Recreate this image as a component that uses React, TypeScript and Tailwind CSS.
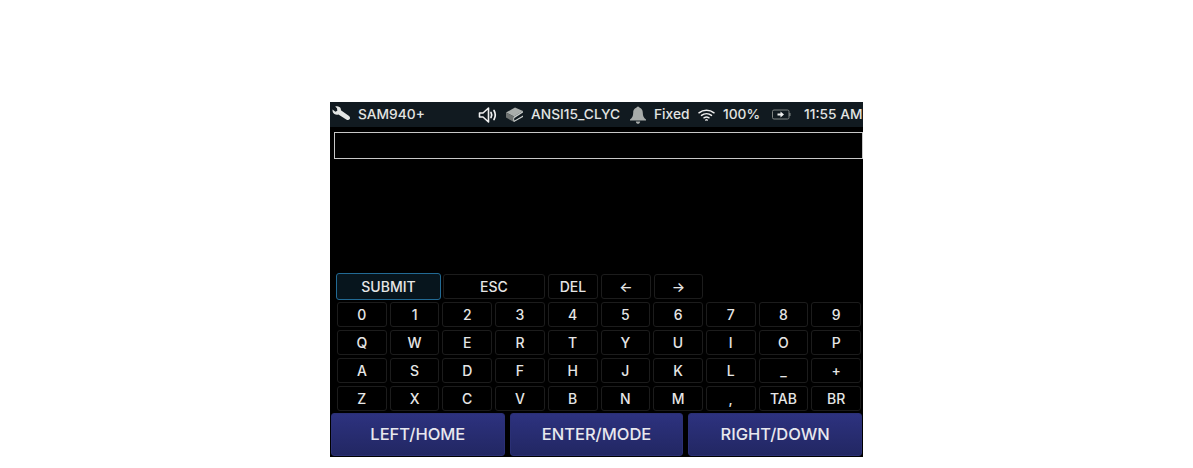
import React from "react";

const rows = [
    ["0", "1", "2", "3", "4", "5", "6", "7", "8", "9"],
    ["Q", "W", "E", "R", "T", "Y", "U", "I", "O", "P"],
    ["A", "S", "D", "F", "H", "J", "K", "L", "_", "+"],
    ["Z", "X", "C", "V", "B", "N", "M", ",", "TAB", "BR"],
];

function Key({ label, className = "" }: { label: string; className?: string }) {
    return (
        <div className={`h-[25px] pb-[1px] flex items-center justify-center rounded-[3px] border border-[#1c1c1c] text-[14px] font-medium text-[#e6e6e6] ${className}`}>
            {label}
        </div>
    );
}

function WrenchIcon() {
    return (
        <svg width="19" height="17" viewBox="0 0 19 17" fill="#e4e6e4">
            <path d="M.6 3.600 3.400 5.800l1.900-1.100L5 2.200 3.200.6C5.600-.3 8 .7 8.700 2.600c.2.600.3 1.200.2 1.700l7.800 5.400c1.300.9 1.700 2.300 1 3.300-.8 1.100-2.100 1.300-3.400.4L6.400 8.400c-.9.300-1.900.4-2.800.2C1.500 8 .2 5.800.6 3.600Z" />
        </svg>
    );
}

function SpeakerIcon() {
    return (
        <svg width="20" height="18" viewBox="0 0 20 18" fill="none" stroke="#f0f0f0" strokeWidth="1.600">
            <path d="M1.500 7v4h3.500l5.500 5V2L5 7H1.500Z" strokeLinejoin="round" />
            <path d="M13 6.500c.9 1.500.9 3.500 0 5M16 4.500c1.600 2.800 1.600 6.200 0 9" strokeWidth="1.700" strokeLinecap="round" />
        </svg>
    );
}

function BookIcon() {
    return (
        <svg width="19" height="17" viewBox="0 0 19 17">
            <path d="M1 6.500 10 1.500l8 3.500-9 5.500L1 6.500Z" fill="#a9adab" />
            <path d="M1 6.500v5l8 4.500v-5.500L1 6.500Z" fill="#6f7372" />
            <path d="M9 10.500 18 5v1.500L9.500 12c-.5.500-.5 2 0 2.500l8.500-5V11l-9 5c-1-1-1-4.500 0-5.500Z" fill="#c9cdcb" />
        </svg>
    );
}

function BellIcon() {
    return (
        <svg width="18" height="18" viewBox="0 0 18 18" fill="#a8acaa">
            <circle cx="9" cy="2" r="1.500" />
            <path d="M9 1.500c3 0 4.800 2.200 4.800 5.200 0 3.300 1 5 3.200 6.800v1H1v-1c2.200-1.800 3.200-3.500 3.200-6.800C4.200 3.700 6 1.500 9 1.500Z" />
            <path d="M6.800 15.500h4.400C11 17 10 17.800 9 17.800S7 17 6.800 15.500Z" />
        </svg>
    );
}

function WifiIcon() {
    return (
        <svg width="17" height="12" viewBox="0 0 17 12" fill="none" stroke="#f0f0f0" strokeWidth="1.500" strokeLinecap="round">
            <path d="M1 3.800c4.300-3.400 10.700-3.400 15 0" />
            <path d="M3.500 6.400c2.900-2.200 7.100-2.200 10 0" />
            <path d="M6 8.800c1.500-1 3.500-1 5 0" />
            <path d="M7.800 11c.4-.3 1-.3 1.400 0" />
        </svg>
    );
}

function BatteryIcon() {
    return (
        <svg width="19" height="11" viewBox="0 0 19 11" fill="none">
            <rect x="0.500" y="1" width="16.500" height="9" rx="1.500" stroke="#7f8382" />
            <rect x="17.200" y="4" width="1.300" height="3" fill="#7f8382" />
            <path d="M5.500 4.500h3V2.500l3.500 3-3.500 3v-2h-3v-2Z" fill="#f0f0f0" />
        </svg>
    );
}

export default function App() {
    return (
        <div className="w-[1193px] h-[468px] bg-white pt-[102px] flex justify-center font-['Inter',sans-serif]">
            <div className="w-[533px] h-[355px] bg-black flex flex-col">
                <div className="h-[25px] bg-[#111a20] flex items-center text-[13.750px] font-medium text-[#e2e4e2] whitespace-nowrap overflow-hidden">
                    <div className="ml-[2px] w-[26px] shrink-0"><WrenchIcon /></div>
                    <span className="w-[65px] shrink-0">SAM940+</span>
                    <div className="ml-[55px] shrink-0"><SpeakerIcon /></div>
                    <div className="ml-[7px] shrink-0"><BookIcon /></div>
                    <span className="ml-[7px] w-[90px] shrink-0">ANSI15_CLYC</span>
                    <div className="ml-[8px] shrink-0"><BellIcon /></div>
                    <span className="ml-[7px] w-[35px] shrink-0">Fixed</span>
                    <div className="ml-[9px] shrink-0"><WifiIcon /></div>
                    <span className="ml-[8px] w-[36px] shrink-0">100%</span>
                    <div className="ml-[13px] shrink-0"><BatteryIcon /></div>
                    <span className="ml-[13px] shrink-0">11:55 AM</span>
                </div>
                <div className="mt-[5px] ml-[4px] h-[27px] border border-[#c8c8c8] bg-black" />
                <div className="mt-[114px] pl-[6px] pr-[2px] flex items-center">
                    <div className="w-[105px] h-[27px] pb-[1px] flex items-center justify-center rounded-[3px] border border-[#226a94] bg-[#07151d] text-[14px] font-medium text-[#e6e6e6]">SUBMIT</div>
                    <Key label="ESC" className="ml-[2px] w-[102px]" />
                    <Key label="DEL" className="ml-[3px] w-[50px]" />
                    <Key label="←" className="ml-[3px] w-[50px]" />
                    <Key label="→" className="ml-[3px] w-[49px]" />
                </div>
                <div className="mt-[2px] pl-[7px] pr-[2px] flex flex-col gap-[3px]">
                    {rows.map((row, index) => (
                        <div key={index} className="grid grid-cols-10 gap-[3px]">
                            {row.map((x) => (
                                <Key key={x} label={x} />
                            ))}
                        </div>
                    ))}
                </div>
                <div className="mt-[2px] px-[1px] flex gap-[5px]">
                    {["LEFT/HOME", "ENTER/MODE", "RIGHT/DOWN"].map((x) => (
                        <div key={x} className="flex-1 h-[43px] flex items-center justify-center rounded-[3px] border border-[#2b3075] bg-gradient-to-b from-[#2d327f] to-[#222763] text-[16.500px] font-medium text-[#e8e8ee]">
                            {x}
                        </div>
                    ))}
                </div>
            </div>
        </div>
    );
}
